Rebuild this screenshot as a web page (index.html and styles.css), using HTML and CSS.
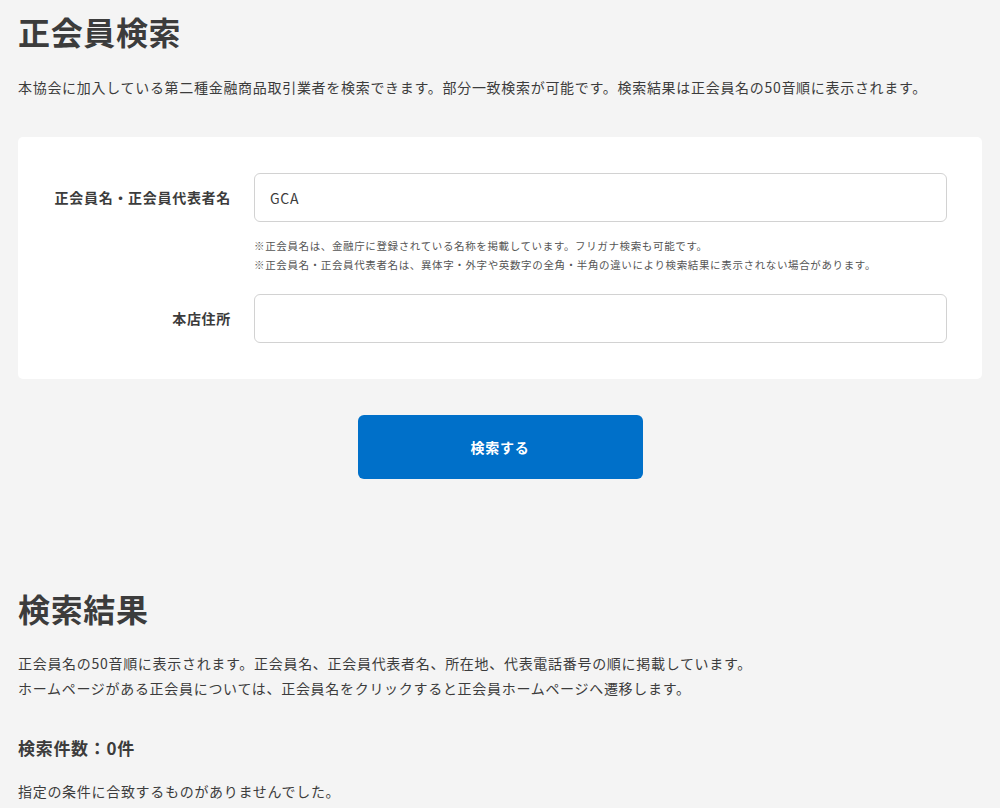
FILE: index.html
```html
<!DOCTYPE html>
<html lang="ja">
<head>
    <meta charset="UTF-8">
    <meta name="viewport" content="width=device-width, initial-scale=1.0">
    <title>正会員検索</title>
    <link rel="stylesheet" href="styles.css">
</head>
<body>
    <div class="page">
        <h1 class="title">正会員検索</h1>
        <p class="lead">本協会に加入している第二種金融商品取引業者を検索できます。部分一致検索が可能です。検索結果は正会員名の50音順に表示されます。</p>

        <form class="search-box" onsubmit="return false;">
            <div class="field">
                <label class="field-label" for="memberName">正会員名・正会員代表者名</label>
                <div class="field-body">
                    <input class="text-input" id="memberName" type="text" value="GCA">
                    <div class="note">
                        ※正会員名は、金融庁に登録されている名称を掲載しています。フリガナ検索も可能です。<br>
                        ※正会員名・正会員代表者名は、異体字・外字や英数字の全角・半角の違いにより検索結果に表示されない場合があります。
                    </div>
                </div>
            </div>
            <div class="field">
                <label class="field-label" for="address">本店住所</label>
                <div class="field-body">
                    <input class="text-input" id="address" type="text">
                </div>
            </div>
        </form>

        <div class="actions">
            <button class="search-button" type="button">検索する</button>
        </div>

        <h2 class="title result-title">検索結果</h2>
        <p class="lead result-lead">正会員名の50音順に表示されます。正会員名、正会員代表者名、所在地、代表電話番号の順に掲載しています。<br>ホームページがある正会員については、正会員名をクリックすると正会員ホームページへ遷移します。</p>

        <h3 class="count">検索件数：0件</h3>
        <p class="empty">指定の条件に合致するものがありませんでした。</p>
    </div>
</body>
</html>
```

FILE: styles.css
```css
body { margin: 0; background-color: #f4f4f4; color: #3c3c3c; font-family: "Noto Sans CJK JP", "Noto Sans", sans-serif; font-size: 14px; letter-spacing: 0.05em; }
.page { padding: 0 18px 0 18px; }
.title { margin: 0; padding-top: 9px; font-size: 32px; line-height: 44px; font-weight: 700; color: #3c3c3c; letter-spacing: 0.02em; }
.lead { margin: 22px 0 0; font-size: 14px; line-height: 25px; }
.search-box { margin-top: 37px; background-color: #fff; border-radius: 5px; padding: 36px 35px 36px 0; display: flex; flex-direction: column; gap: 20px; }
.field { display: flex; align-items: flex-start; }
.field-label { width: 213px; flex-shrink: 0; text-align: right; font-weight: 700; font-size: 14px; line-height: 48px; margin-right: 23px; }
.field-body { flex: 1; }
.text-input { display: block; width: 100%; box-sizing: border-box; height: 49px; padding: 0 15px; border: 1px solid #d2d2d2; border-radius: 6px; background: #fff; font-family: inherit; font-size: 14px; color: #3c3c3c; letter-spacing: 0.05em; }
.note { margin-top: 14px; font-size: 10.5px; line-height: 19px; color: #555; letter-spacing: 0.06em; }
.actions { display: flex; justify-content: center; margin-top: 36px; }
.search-button { width: 285px; height: 64px; border: none; border-radius: 6px; background-color: #0070c9; color: #fff; font-family: inherit; font-size: 14px; font-weight: 700; letter-spacing: 0.05em; cursor: pointer; }
.result-title { margin-top: 107px; padding-top: 0; }
.result-lead { margin-top: 21px; }
.count { margin: 35px 0 0; font-size: 17px; line-height: 24px; font-weight: 700; }
.empty { margin: 19px 0 0; line-height: 24px; }
```
